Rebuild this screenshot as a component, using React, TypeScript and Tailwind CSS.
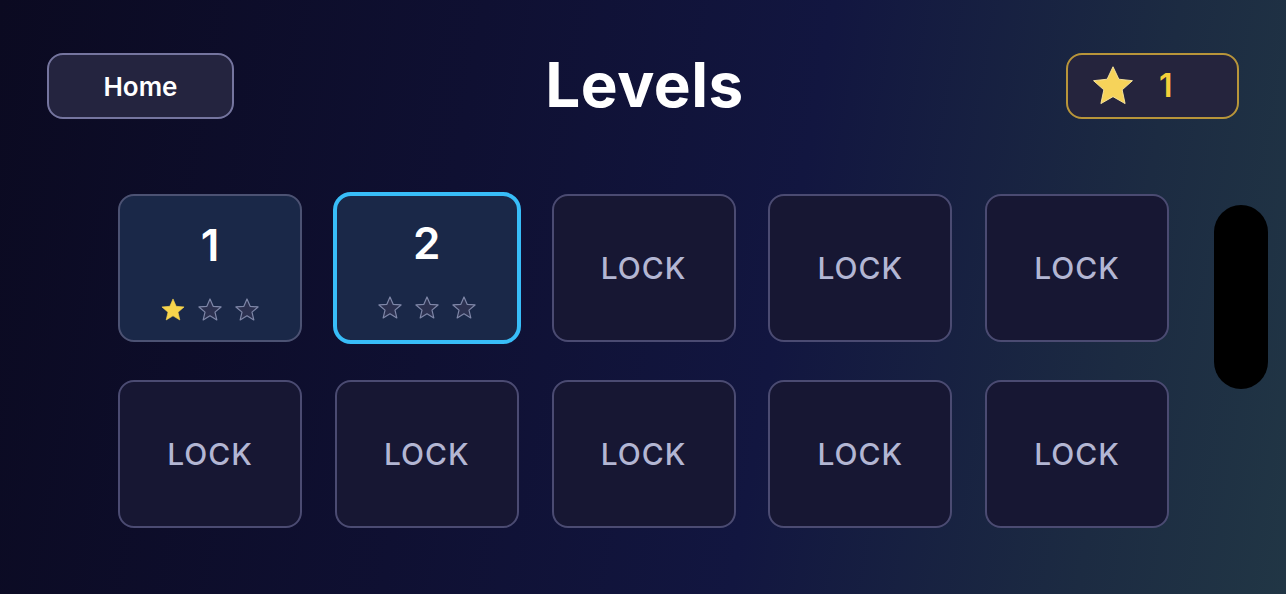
import React from "react";

const STAR =
  "M12 1.8 L14.9 8.6 L22.2 9.2 L16.6 14 L18.3 21.2 L12 17.4 L5.7 21.2 L7.4 14 L1.8 9.2 L9.1 8.6 Z";

const FAT_STAR =
  "M12 1.5 L15.2 8.3 L22.6 9.1 L17 14.1 L18.6 21.6 L12 17.8 L5.4 21.6 L7 14.1 L1.4 9.1 L8.8 8.3 Z";

function Star({ filled, size = 26 }: { filled: boolean; size?: number }) {
  return (
    <svg width={size} height={size} viewBox="0 0 24 24">
      <path
        d={STAR}
        fill={filled ? "#f7d44c" : "#2c3150"}
        stroke={filled ? "#f7d44c" : "#7f87a8"}
        strokeWidth={filled ? 0.6 : 1.1}
        strokeLinejoin="round"
      />
    </svg>
  );
}

type Level = { n: number; unlocked: boolean; stars: number; selected?: boolean };

const levels: Level[] = [
  { n: 1, unlocked: true, stars: 1 },
  { n: 2, unlocked: true, stars: 0, selected: true },
  ...Array.from({ length: 8 }, (_, i) => ({ n: i + 3, unlocked: false, stars: 0 })),
];

function LevelCard({ level }: { level: Level }) {
  if (!level.unlocked) {
    return (
      <div className="w-[184px] h-[148px] rounded-[16px] border-2 border-[#4b4b72] bg-[#171733] flex items-center justify-center">
        <span className="text-[30px] font-medium tracking-[1px] text-[#b3b6d3] mt-[1px]">LOCK</span>
      </div>
    );
  }
  return (
    <div
      className={
        level.selected
          ? "w-[188px] h-[152px] -m-[2px] rounded-[18px] border-4 border-[#38bdf8] bg-[#1a2848] flex flex-col items-center"
          : "w-[184px] h-[148px] rounded-[16px] border-2 border-[#4c5273] bg-[#1a2848] flex flex-col items-center"
      }
    >
      <span
        className={
          level.selected
            ? "text-[44px] font-semibold text-white leading-none mt-[25px]"
            : "text-[44px] font-semibold text-white leading-none mt-[27px]"
        }
      >
        {level.n}
      </span>
      <div className="flex gap-[11px] mt-[30px]">
        {[0, 1, 2].map((i) => (
          <Star key={i} filled={i < level.stars} />
        ))}
      </div>
    </div>
  );
}

export default function App() {
  return (
    <div
      className="relative w-[1286px] h-[594px] overflow-hidden bg-[linear-gradient(100deg,#0b0a21_0%,#0f1032_35%,#121640_60%,#1c2b42_85%,#213645_100%)] text-white"
      style={{ fontFamily: "Inter, 'Noto Sans', sans-serif" }}
    >
      <div className="grid grid-cols-[1fr_auto_1fr] items-center pl-[47px] pr-[47px] pt-[53px]">
        <div className="flex justify-start">
          <button className="w-[187px] h-[66px] rounded-[16px] border-2 border-[#75759f] bg-[#24243f] text-[26px] font-semibold text-white">
            Home
          </button>
        </div>
        <h1 className="text-[62px] font-bold leading-none tracking-[0.5px] -mt-[2px] pl-[3px]">Levels</h1>
        <div className="flex justify-end">
          <div className="w-[173px] h-[66px] rounded-[16px] border-2 border-[#b8953a] bg-[#25243d] flex items-center pl-[23px] gap-[24px]">
            <svg width="44" height="44" viewBox="0 0 24 24">
              <path d={FAT_STAR} fill="#f6d35a" stroke="#fbe7a0" strokeWidth="0.5" strokeLinejoin="round" />
            </svg>
            <span className="text-[32px] font-semibold text-[#f5d03a] leading-none">1</span>
          </div>
        </div>
      </div>

      <div className="grid grid-cols-[repeat(5,184px)] gap-x-[32.75px] gap-y-[38px] pl-[118px] pt-[75px]">
        {levels.map((l) => (
          <LevelCard key={l.n} level={l} />
        ))}
      </div>

      <div className="absolute left-[1214px] top-[205px] w-[54px] h-[184px] rounded-full bg-black" />
    </div>
  );
}
